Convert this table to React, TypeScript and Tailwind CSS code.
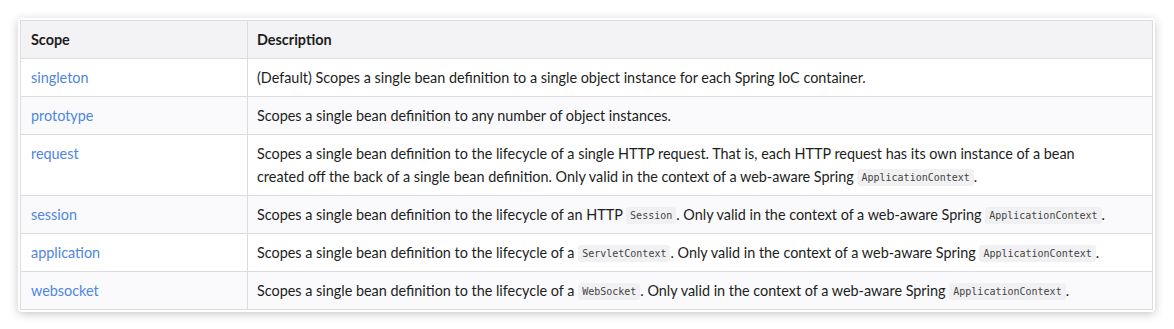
import React from "react";

const C = ({ children }: { children: React.ReactNode }) => (
  <code className="bg-[#f1f1f3] text-[#444] rounded-[3px] px-[4px] py-[3px] text-[10px] leading-none font-['DejaVu_Sans_Mono',monospace] align-[1px]">
    {children}
  </code>
);

const rows: { scope: string; desc: React.ReactNode }[] = [
  {
    scope: "singleton",
    desc: "(Default) Scopes a single bean definition to a single object instance for each Spring IoC container.",
  },
  {
    scope: "prototype",
    desc: "Scopes a single bean definition to any number of object instances.",
  },
  {
    scope: "request",
    desc: (
      <>
        Scopes a single bean definition to the lifecycle of a single HTTP request. That is, each HTTP request has its own instance of a bean
        <br />
        created off the back of a single bean definition. Only valid in the context of a web-aware Spring <C>ApplicationContext</C>.
      </>
    ),
  },
  {
    scope: "session",
    desc: (
      <>
        Scopes a single bean definition to the lifecycle of an HTTP <C>Session</C>. Only valid in the context of a web-aware Spring{" "}
        <C>ApplicationContext</C>.
      </>
    ),
  },
  {
    scope: "application",
    desc: (
      <>
        Scopes a single bean definition to the lifecycle of a <C>ServletContext</C>. Only valid in the context of a web-aware Spring{" "}
        <C>ApplicationContext</C>.
      </>
    ),
  },
  {
    scope: "websocket",
    desc: (
      <>
        Scopes a single bean definition to the lifecycle of a <C>WebSocket</C>. Only valid in the context of a web-aware Spring{" "}
        <C>ApplicationContext</C>.
      </>
    ),
  },
];

export default function App() {
  return (
    <div className="w-[1174px] h-[329px] bg-white pt-[18px] pl-[18px] font-['Lato',sans-serif] text-[14.4px] text-[#1c1e21]">
      <div className="w-[1137px] bg-white rounded-[4px] p-[2px] shadow-[0_2px_10px_rgba(0,0,0,0.22)]">
        <table className="w-full border-collapse border border-[#dcdcdc] leading-[23px]">
          <thead>
            <tr className="bg-[#f3f3f5]">
              <th className="w-[227px] h-[38px] text-left font-bold px-[10px] py-0 border border-[#dcdcdc]">Scope</th>
              <th className="h-[38px] text-left font-bold px-[9px] py-0 border border-[#dcdcdc]">Description</th>
            </tr>
          </thead>
          <tbody>
            {rows.map((r, i) => (
              <tr key={r.scope} className={i % 2 === 1 ? "bg-[#fafafc]" : "bg-white"}>
                <td className="align-top px-[10px] py-[7px] border border-[#dcdcdc] text-[#4f86e0]">{r.scope}</td>
                <td className="align-top px-[9px] py-[7px] border border-[#dcdcdc]">{r.desc}</td>
              </tr>
            ))}
          </tbody>
        </table>
      </div>
    </div>
  );
}
